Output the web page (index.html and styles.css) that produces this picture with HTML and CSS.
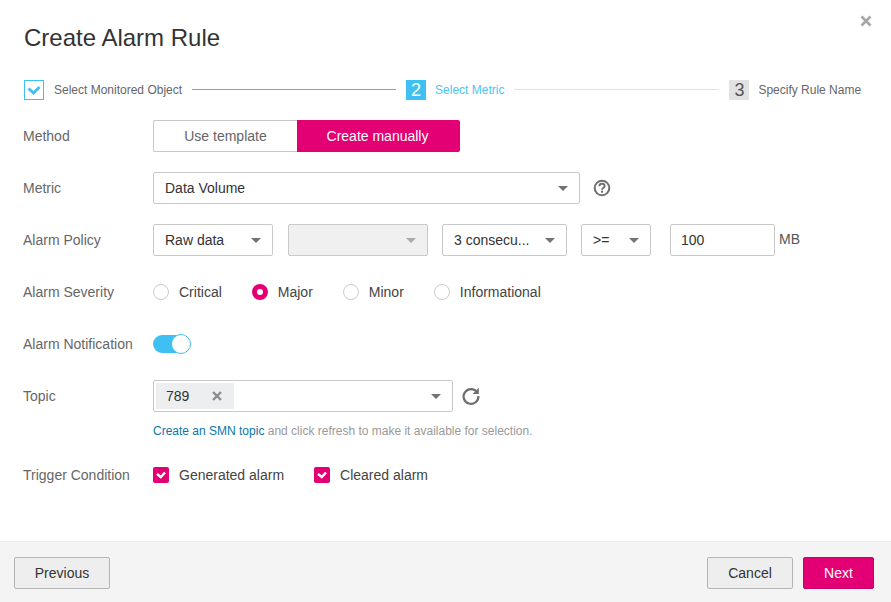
FILE: index.html
```html
<!DOCTYPE html>
<html lang="en">
<head>
    <meta charset="UTF-8">
    <title>Create Alarm Rule</title>
    <link rel="stylesheet" href="styles.css">
</head>
<body>
<div class="dialog">
    <div class="main">
        <svg class="close" width="12" height="12" viewBox="0 0 12 12"><path d="M1.5 1.5l9 9M10.5 1.5l-9 9" stroke="#a6a6a6" stroke-width="2.6" fill="none"/></svg>
        <h1 class="title">Create Alarm Rule</h1>
        <div class="steps">
            <span class="step-check"><svg width="14" height="11" viewBox="0 0 14 11"><path d="M1.5 3.5l5 4.5 6-6" stroke="#3fc0f2" stroke-width="2.8" fill="none"/></svg></span>
            <span class="step-text">Select Monitored Object</span>
            <span class="step-line done"></span>
            <span class="step-num current">2</span>
            <span class="step-text current-text">Select Metric</span>
            <span class="step-line next"></span>
            <span class="step-num">3</span>
            <span class="step-text">Specify Rule Name</span>
        </div>

        <div class="row">
            <label class="label">Method</label>
            <div class="switch-group">
                <span class="seg">Use template</span>
                <span class="seg seg-on">Create manually</span>
            </div>
        </div>

        <div class="row">
            <label class="label">Metric</label>
            <div class="select w-metric"><span>Data Volume</span><i class="caret"></i></div>
            <svg class="help" width="18" height="18" viewBox="0 0 18 18">
                <circle cx="9" cy="9" r="7.3" stroke="#6f6f6f" stroke-width="2" fill="none"/>
                <path d="M6.4 7.2c0-1.6 1.2-2.4 2.6-2.4s2.6.8 2.6 2.2c0 2-2.6 1.9-2.6 3.7" stroke="#6f6f6f" stroke-width="1.9" fill="none"/>
                <rect x="8" y="11.7" width="2" height="2" fill="#6f6f6f"/>
            </svg>
        </div>

        <div class="row">
            <label class="label">Alarm Policy</label>
            <div class="select w-raw"><span>Raw data</span><i class="caret"></i></div>
            <div class="select w-off disabled"><span></span><i class="caret"></i></div>
            <div class="select w-count"><span>3 consecu...</span><i class="caret"></i></div>
            <div class="select w-op"><span>&gt;=</span><i class="caret"></i></div>
            <input class="num" type="text" value="100">
            <span class="unit">MB</span>
        </div>

        <div class="row">
            <label class="label">Alarm Severity</label>
            <div class="radios">
                <span class="opt"><i class="radio"></i>Critical</span>
                <span class="opt"><i class="radio on"></i>Major</span>
                <span class="opt"><i class="radio"></i>Minor</span>
                <span class="opt"><i class="radio"></i>Informational</span>
            </div>
        </div>

        <div class="row">
            <label class="label">Alarm Notification</label>
            <span class="toggle"><i class="knob"></i></span>
        </div>

        <div class="row row-topic">
            <label class="label">Topic</label>
            <div class="select w-topic">
                <span class="tag">789<svg width="10" height="10" viewBox="0 0 10 10"><path d="M1 1l8 8M9 1l-8 8" stroke="#8c8c8c" stroke-width="2.4" fill="none"/></svg></span>
                <i class="caret"></i>
            </div>
            <svg class="refresh" width="20" height="20" viewBox="0 0 20 20">
                <path d="M16.2 6.4A7.4 7.4 0 1 0 17.4 10" stroke="#6f6f6f" stroke-width="2.2" fill="none"/>
                <path d="M17.8 1.8v6.2h-6.2z" fill="#6f6f6f"/>
            </svg>
        </div>
        <p class="hint"><a class="link">Create an SMN topic</a> and click refresh to make it available for selection.</p>

        <div class="row row-trigger">
            <label class="label">Trigger Condition</label>
            <span class="opt opt-check"><i class="check"><svg width="10" height="8" viewBox="0 0 10 8"><path d="M1 3l3.8 3L9 1.5" stroke="#fff" stroke-width="2.4" fill="none"/></svg></i>Generated alarm</span>
            <span class="opt"><i class="check"><svg width="10" height="8" viewBox="0 0 10 8"><path d="M1 3l3.8 3L9 1.5" stroke="#fff" stroke-width="2.4" fill="none"/></svg></i>Cleared alarm</span>
        </div>
    </div>
    <div class="footer">
        <button class="btn btn-prev">Previous</button>
        <div class="footer-right">
            <button class="btn btn-cancel">Cancel</button>
            <button class="btn btn-next">Next</button>
        </div>
    </div>
</div>
</body>
</html>
```

FILE: styles.css
```css
* {
    margin: 0;
    padding: 0;
    box-sizing: border-box;
}

body {
    background: #fff;
    font-family: "Liberation Sans", Arial, sans-serif;
    font-size: 14px;
    color: #252b3a;
}

.dialog {
    width: 891px;
    height: 602px;
    display: flex;
    flex-direction: column;
    overflow: hidden;
}

.main {
    flex: 1;
    position: relative;
    padding: 24px 23px 0;
}

.close {
    position: absolute;
    right: 19px;
    top: 15px;
}

.title {
    margin-left: 1px;
    font-size: 24px;
    font-weight: normal;
    line-height: 28px;
    color: #333;
}

.steps {
    display: flex;
    align-items: center;
    height: 20px;
    margin: 28px 0 20px 1px;
    font-size: 12px;
    color: #666;
    white-space: nowrap;
}

.step-check {
    width: 20px;
    height: 20px;
    border: 1px solid #3fc0f2;
    display: flex;
    align-items: center;
    justify-content: center;
    margin-right: 10px;
}

.step-line {
    width: 204px;
    height: 1px;
    background: #e2e2e2;
    margin: 0 10px 1px;
}

.step-line.next {
    width: 205px;
}

.step-line.done {
    background: #3fbdec;
}

.step-num {
    width: 20px;
    height: 20px;
    background: #e2e2e2;
    color: #555;
    font-size: 18px;
    line-height: 20px;
    text-align: center;
    margin-right: 9px;
}

.step-num.current {
    background: #3fc0f2;
    color: #fff;
}

.current-text {
    color: #4cc4f4;
}

.row {
    display: flex;
    align-items: center;
    height: 32px;
    margin-bottom: 20px;
}

.label {
    width: 130px;
    flex: none;
    color: #666;
}

.switch-group {
    display: flex;
    height: 32px;
}

.seg {
    display: flex;
    align-items: center;
    justify-content: center;
    width: 144px;
    border: 1px solid #c9c9c9;
    border-right: 0;
    border-radius: 2px 0 0 2px;
    color: #666;
}

.seg-on {
    width: 163px;
    padding-right: 2px;
    background: #e20074;
    border: 0;
    border-radius: 0 2px 2px 0;
    color: #fff;
}

.select {
    display: flex;
    align-items: center;
    justify-content: space-between;
    height: 32px;
    padding: 0 12px 0 11px;
    border: 1px solid #c9c9c9;
    border-radius: 2px;
    background: #fff;
    color: #333;
    white-space: nowrap;
}

.select.disabled {
    background: #f0f0f0;
}

.select.disabled .caret {
    border-top-color: #aaa;
}

.caret {
    width: 0;
    height: 0;
    border-left: 5px solid transparent;
    border-right: 5px solid transparent;
    border-top: 5px solid #737373;
    margin-right: -1px;
    flex: none;
}

.w-metric { width: 427px; }
.w-raw { width: 120px; margin-right: 15px; }
.w-off { width: 140px; margin-right: 14px; }
.w-count { width: 125px; margin-right: 14px; }
.w-op { width: 70px; margin-right: 19px; }
.w-topic { width: 300px; padding-left: 2px; }

.help {
    margin-left: 13px;
}

.num {
    width: 105px;
    height: 32px;
    padding: 0 10px;
    border: 1px solid #c9c9c9;
    border-radius: 2px;
    font: inherit;
    color: #333;
}

.unit {
    margin-left: 4px;
    margin-top: -2px;
    color: #555;
}

.radios {
    display: flex;
}

.opt {
    display: flex;
    align-items: center;
    color: #444;
    white-space: nowrap;
}

.radios .opt {
    margin-right: 30px;
}

.radio {
    width: 16px;
    height: 16px;
    border: 1px solid #ccc;
    border-radius: 50%;
    margin-right: 10px;
}

.radio.on {
    border: 5px solid #e20074;
}

.toggle {
    position: relative;
    display: block;
    width: 38px;
    height: 20px;
}

.toggle::before {
    content: "";
    position: absolute;
    left: 0;
    top: 1px;
    width: 32px;
    height: 18px;
    border-radius: 9px;
    background: #3fc0f2;
}

.knob {
    position: absolute;
    right: 0;
    top: 0;
    width: 20px;
    height: 20px;
    border: 1px solid #3fc0f2;
    border-radius: 50%;
    background: #fff;
}

.row-topic {
    margin-bottom: 0;
}

.tag {
    display: flex;
    align-items: center;
    justify-content: space-between;
    width: 78px;
    height: 26px;
    padding: 0 12px 0 10px;
    background: #eceef0;
    border-radius: 2px;
}

.refresh {
    margin-left: 8px;
}

.hint {
    margin-top: 12px;
    margin-left: 130px;
    font-size: 12px;
    line-height: 14px;
    color: #999;
}

.link {
    color: #0d76a8;
}

.row-trigger {
    margin-top: 21px;
}

.opt-check {
    margin-right: 30px;
}

.check {
    display: flex;
    align-items: center;
    justify-content: center;
    width: 16px;
    height: 16px;
    border-radius: 2px;
    background: #e20074;
    margin-right: 10px;
}

.footer {
    display: flex;
    align-items: center;
    justify-content: space-between;
    height: 61px;
    padding: 2px 17px 0 14px;
    background: #f4f4f4;
    border-top: 1px solid #ececec;
}

.footer-right {
    display: flex;
    gap: 10px;
}

.btn {
    height: 32px;
    border: 1px solid #b5b5b5;
    border-radius: 2px;
    background: #eee;
    font: inherit;
    color: #333;
}

.btn-prev { width: 96px; }
.btn-cancel { width: 86px; }

.btn-next {
    width: 71px;
    background: #e20074;
    border-color: #c4006a;
    color: #fff;
}
```
